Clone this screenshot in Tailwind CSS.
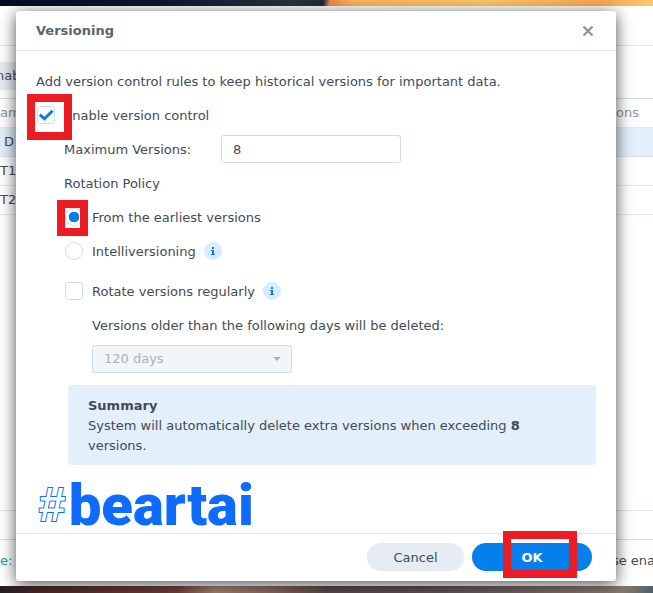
<!DOCTYPE html>
<html lang="en">

<head>
    <meta charset="UTF-8">
    <meta name="viewport" content="width=device-width, initial-scale=1.0">
    <title>Versioning</title>
    <script src="https://cdn.jsdelivr.net/npm/@tailwindcss/browser@4"></script>
</head>

<body class="relative flex min-h-screen flex-col overflow-x-hidden bg-white font-['DejaVu_Sans',Verdana,sans-serif] text-[13px] leading-5 text-[#414b55]">

    <!-- Desktop wallpaper, top edge -->
    <div class="h-1.5 shrink-0 bg-[linear-gradient(100deg,#060b22_0%,#0d1730_25%,#26343f_45%,#1e2b38_49.5%,#f0864a_50.5%,#f9b45c_54%,#fcc569_75%,#f8a850_92%,#fcc970_100%)]"></div>

    <!-- Window behind the dialog -->
    <main class="flex grow flex-col overflow-hidden bg-white">
        <div class="h-10 shrink-0 border-b border-[#dfe5ea]"></div>
        <div class="-ml-1 h-[52px] shrink-0 pt-4">
            <button type="button" class="h-7 w-20 bg-[#e6ebf2] text-left">nab</button>
        </div>
        <table class="w-full border-t border-[#d2dee8]">
            <thead>
                <tr class="h-[29px] border-b border-[#e3e9ee] text-left text-[#8c939b]">
                    <th class="font-normal">am</th>
                    <th class="w-[37px] font-normal">ons</th>
                </tr>
            </thead>
            <tbody>
                <tr class="h-[29px] border-b border-[#d5e0ea] bg-[#e3effb]">
                    <td class="pl-1">D</td>
                    <td></td>
                </tr>
                <tr class="h-[29px] border-b border-[#e3e9ee]">
                    <td>T1</td>
                    <td></td>
                </tr>
                <tr class="h-[29px] border-b border-[#e3e9ee]">
                    <td>T2</td>
                    <td></td>
                </tr>
            </tbody>
        </table>
        <div class="grow"></div>
        <div class="h-[29px] shrink-0 border-t border-[#dfe5ea]"></div>
        <div class="flex h-[47px] shrink-0 items-center justify-between border-t border-[#d2dee8] pb-1">
            <p><span class="text-[#0fa3a0]">e:</span> T</p>
            <p class="-mr-0.5">se ena</p>
        </div>
    </main>

    <!-- Desktop wallpaper, bottom edge -->
    <div class="h-[7px] shrink-0 bg-[linear-gradient(100deg,#241d24_0%,#4a2826_6%,#6b4038_27%,#a08070_33%,#8b6d62_40%,#5a474a_50%,#5c4e54_65%,#6e6260_80%,#8a7a70_95%,#4e6068_100%)]"></div>

    <!-- Dialog -->
    <section role="dialog" aria-labelledby="dialogTitle" class="absolute top-[11px] right-[37px] left-4 rounded-[3px] bg-white shadow-[0_3px_16px_rgba(0,0,0,0.7)]">
        <header class="flex h-10 items-center justify-between border-b border-[#d9e4ee] pr-[22px] pl-5">
            <h1 id="dialogTitle" class="font-bold text-[#5b646d]">Versioning</h1>
            <button type="button" aria-label="Close" class="text-[#8e969e]">
                <svg class="size-3" viewBox="0 0 12 12" fill="none" stroke="currentColor" stroke-width="2.4">
                    <path d="M1.5 1.5l9 9M10.5 1.5l-9 9" />
                </svg>
            </button>
        </header>

        <form class="px-5 pt-4">
            <div class="space-y-1.5">
                <p class="pt-[5px] pb-[3px]">Add version control rules to keep historical versions for important data.</p>

                <div class="relative flex h-7 items-center">
                    <input type="checkbox" id="enableVersion" checked class="peer m-px size-[18px] appearance-none rounded-[3px] border border-[#d0dde9] bg-white">
                    <svg class="pointer-events-none absolute left-0.5 hidden size-4 text-[#057feb] peer-checked:block" viewBox="0 0 16 16" fill="none" stroke="currentColor" stroke-width="3">
                        <path d="M1.8 7.6l4.6 4.2L14.6 3.8" />
                    </svg>
                    <label for="enableVersion" class="ml-2 pt-0.5">Enable version control</label>
                    <span class="pointer-events-none absolute -top-[7px] -left-[9px] h-[46px] w-[45px] border-8 border-[#ed1c24]"></span>
                </div>

                <div class="flex h-7 items-center pl-7">
                    <label for="maxVersions" class="w-[157px] pt-0.5">Maximum Versions:</label>
                    <input type="text" id="maxVersions" value="8" class="h-7 w-[180px] rounded-[3px] border border-[#cfdcea] px-[11px]">
                </div>

                <p class="pt-[5px] pb-[3px] pl-7">Rotation Policy</p>

                <div class="relative ml-7 flex h-7 items-center">
                    <input type="radio" id="earliest" name="policy" checked class="m-px size-[18px] appearance-none rounded-full border border-[#d0dde9] bg-white bg-[radial-gradient(circle,#057feb_5px,transparent_5.5px)]">
                    <label for="earliest" class="ml-2 pt-0.5">From the earliest versions</label>
                    <span class="pointer-events-none absolute -top-[3px] -left-[7px] h-9 w-[31px] border-8 border-[#ed1c24]"></span>
                </div>

                <div class="ml-7 flex h-7 items-center">
                    <input type="radio" id="intelli" name="policy" class="m-px size-[18px] appearance-none rounded-full border border-[#d0dde9] bg-white">
                    <label for="intelli" class="ml-2 pt-0.5">Intelliversioning</label>
                    <svg class="ml-2 size-[18px]" viewBox="0 0 18 18">
                        <circle cx="9" cy="9" r="9" fill="#d9ebff" />
                        <path d="M8 5h2v2H8zM7 8h3v4h1v1H7v-1h1V9H7z" fill="#057feb" />
                    </svg>
                </div>
            </div>

            <div class="space-y-1.5 pt-3 pl-7">
                <div class="flex h-7 items-center">
                    <input type="checkbox" id="rotate" class="m-px size-[18px] appearance-none rounded-[3px] border border-[#d0dde9] bg-white">
                    <label for="rotate" class="ml-2 pt-0.5">Rotate versions regularly</label>
                    <svg class="ml-2 size-[18px]" viewBox="0 0 18 18">
                        <circle cx="9" cy="9" r="9" fill="#d9ebff" />
                        <path d="M8 5h2v2H8zM7 8h3v4h1v1H7v-1h1V9H7z" fill="#057feb" />
                    </svg>
                </div>
                <label for="days" class="block pt-[5px] pb-[3px] pl-7">Versions older than the following days will be deleted:</label>
                <div class="relative ml-7 w-[200px]">
                    <select id="days" disabled class="block h-7 w-full appearance-none rounded-[3px] border border-[#cfdce6] bg-[#f3f6f9] px-[11px] text-[#a9b1b9] opacity-100">
                        <option>120 days</option>
                    </select>
                    <svg class="pointer-events-none absolute top-3 right-[11px] h-1 w-2 text-[#a9b1b9]" viewBox="0 0 8 4" fill="currentColor">
                        <path d="M0 0h8L4 4z" />
                    </svg>
                </div>
            </div>

            <div class="mt-3 ml-8 rounded-[4px] bg-[#e3effb] px-5 pt-[11px] pb-[9px]">
                <h2 class="font-bold">Summary</h2>
                <p>System will automatically delete extra versions when exceeding <b>8</b> versions.</p>
            </div>

            <div class="flex h-[68px] items-center gap-1 pt-3 pl-0.5 text-[#0f6bff]">
                <span class="font-['Liberation_Sans',sans-serif] text-5xl font-bold text-white italic [-webkit-text-stroke:2px_#0f6bff] [paint-order:stroke_fill]">#</span>
                <span class="font-['Roboto',sans-serif] text-[58px] leading-none font-black">beartai</span>
            </div>
        </form>

        <footer class="flex justify-end gap-2 border-t border-[#dce4ec] pt-[9px] pr-6 pb-2.5">
            <button type="button" class="h-7 w-[97px] rounded-full bg-[#e6ecf4] pt-0.5">Cancel</button>
            <div class="relative">
                <button type="button" class="h-7 w-[120px] rounded-full bg-[#057feb] pt-0.5 font-bold text-white">OK</button>
                <span class="pointer-events-none absolute -top-3 left-[31px] h-[47px] w-[74px] border-8 border-[#ed1c24]"></span>
            </div>
        </footer>
    </section>

</body>

</html>
